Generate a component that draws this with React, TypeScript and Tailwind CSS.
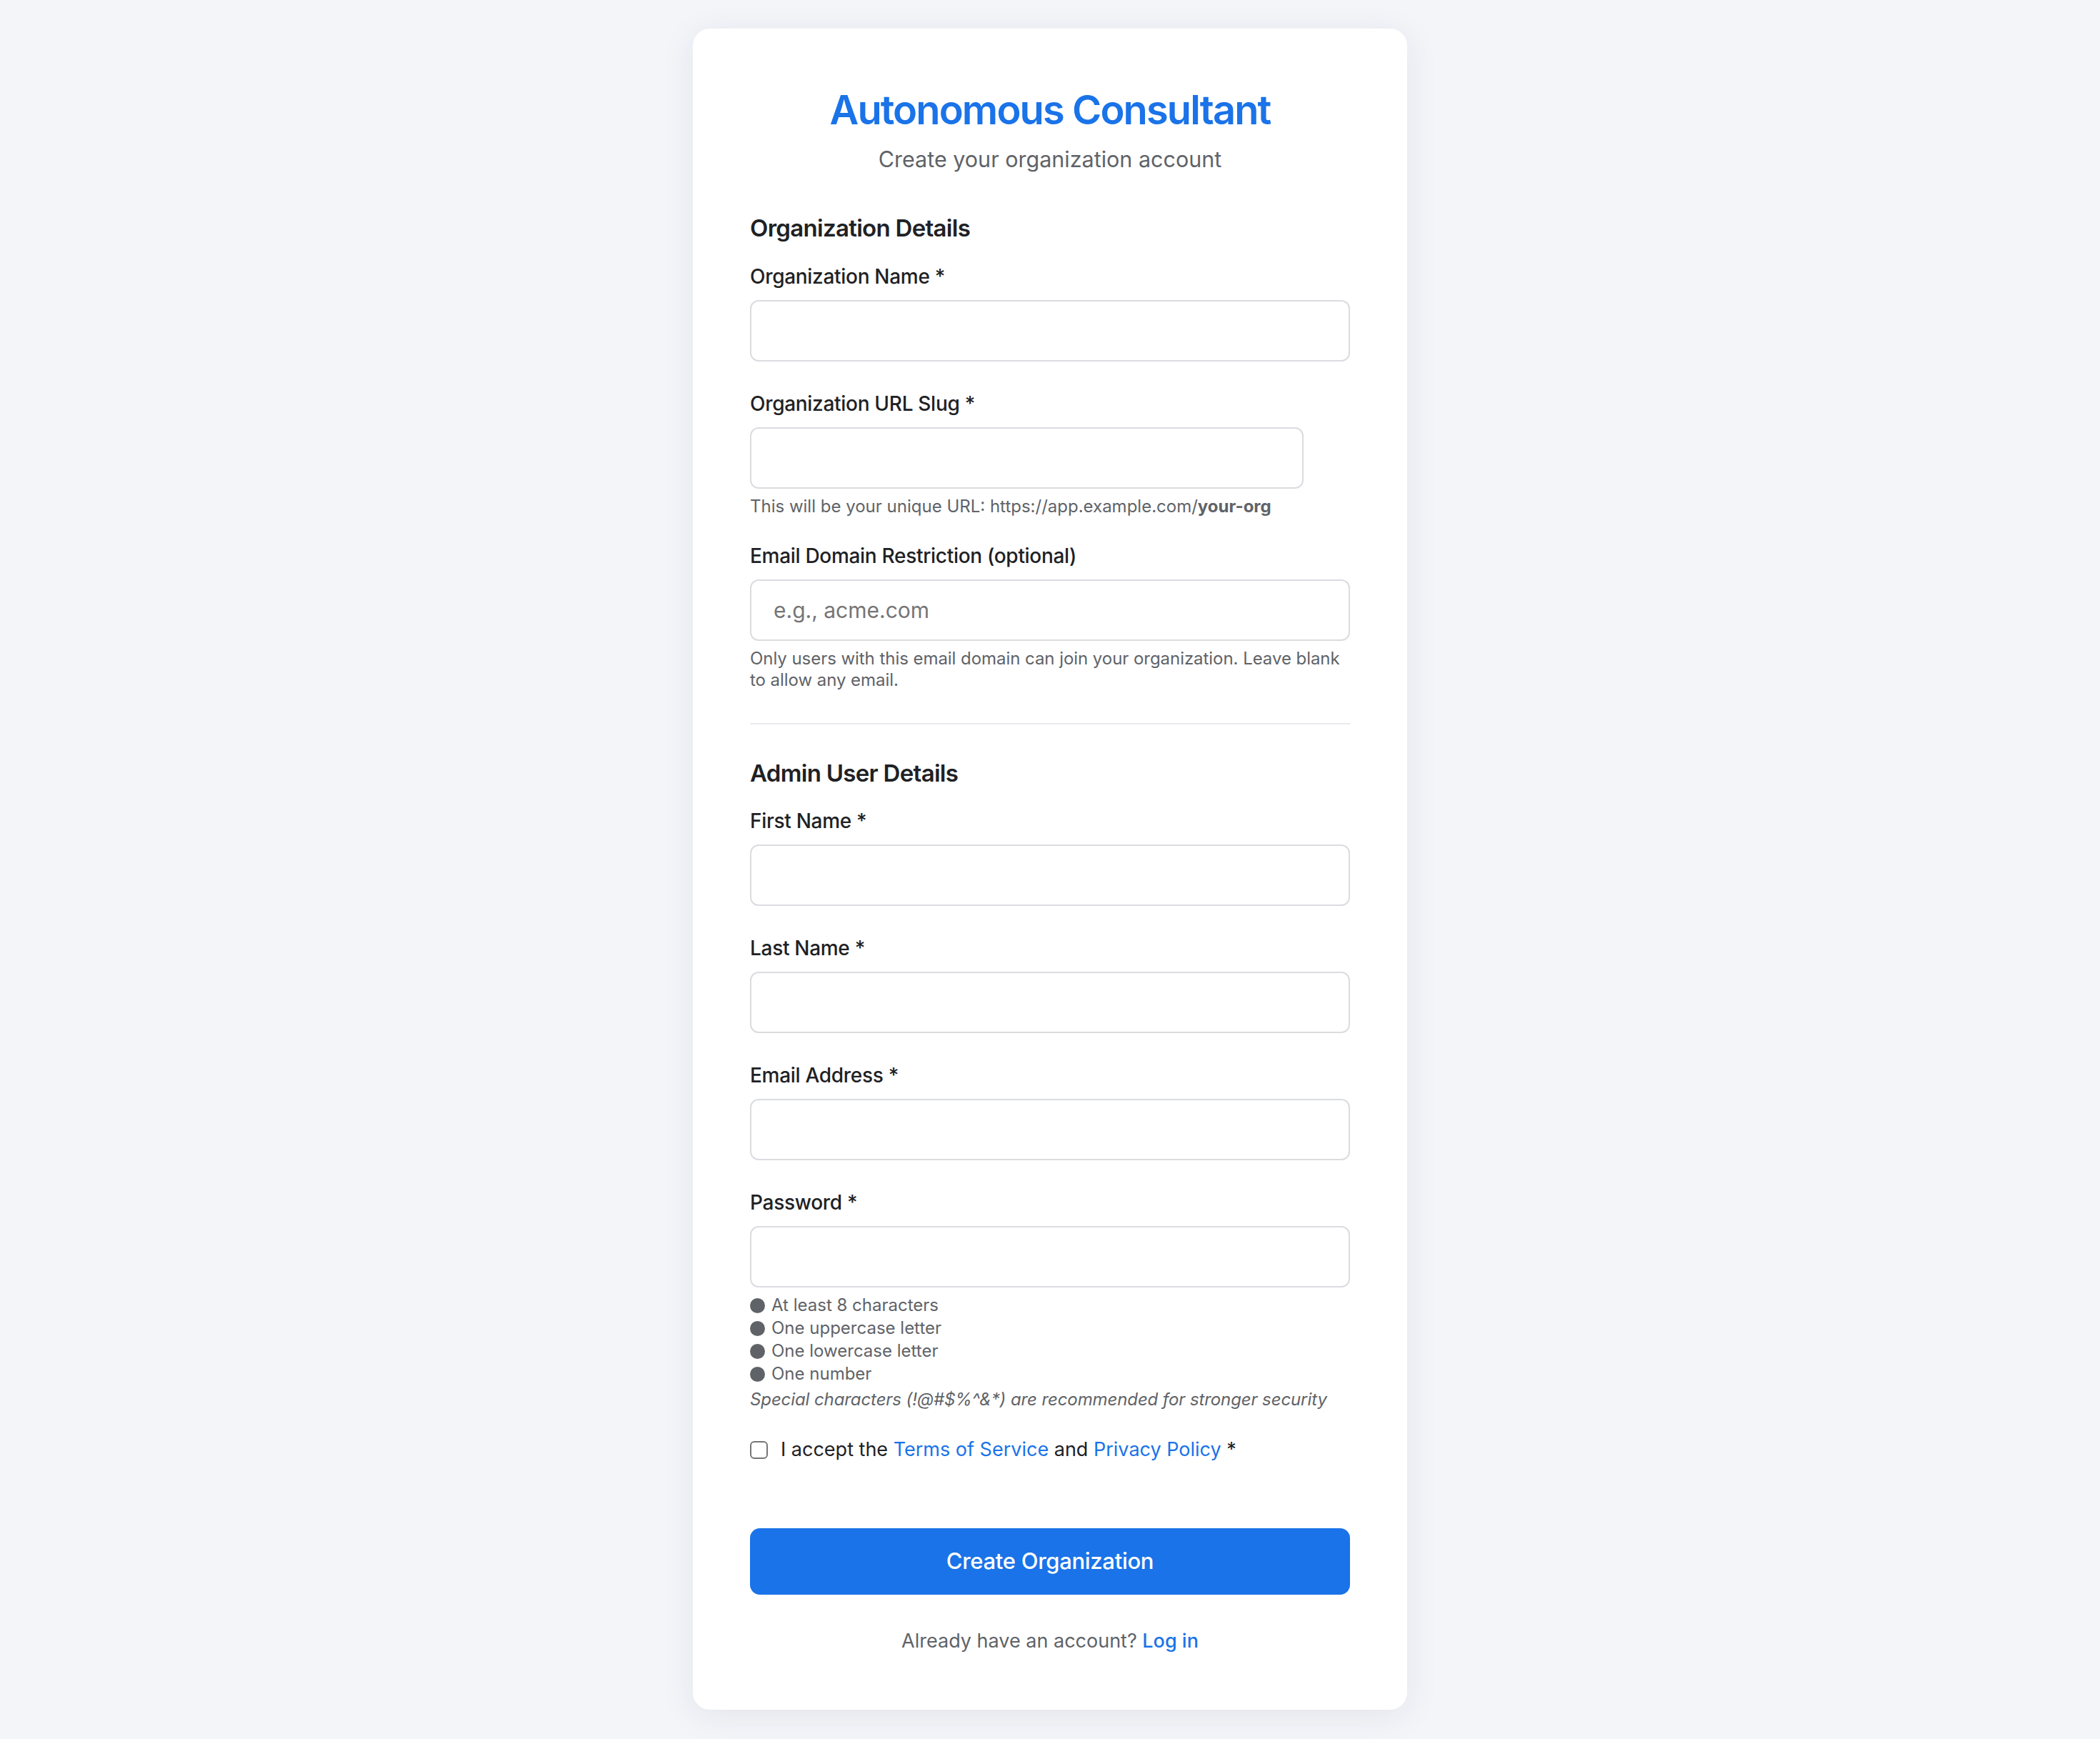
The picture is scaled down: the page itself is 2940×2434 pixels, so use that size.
import React from "react";

function Label({ children, className = "" }: { children: React.ReactNode; className?: string }) {
  return (
    <label className={`block text-[28px] leading-[40px] font-medium tracking-[-0.3px] text-[#202124] ${className}`}>{children}</label>
  );
}

function TextInput({ placeholder, type = "text", className = "w-full" }: { placeholder?: string; type?: string; className?: string }) {
  return (
    <input
      type={type}
      placeholder={placeholder}
      className={`${className} block mt-[13px] h-[86px] rounded-[12px] border-2 border-[#dadce0] bg-white px-[31px] text-[30px] text-[#202124] placeholder:text-[#757575] outline-none`}
    />
  );
}

function Rule({ text }: { text: string }) {
  return (
    <li className="flex items-center gap-[9px] text-[24px] leading-[32px] text-[#5f6368]">
      <span className="inline-block w-[21px] h-[21px] rounded-full bg-[#5f6368]" />
      <span>{text}</span>
    </li>
  );
}

export default function App() {
  return (
    <div className="min-h-[2434px] bg-[#f4f5f9] flex justify-center items-start pt-[40px] pb-[41px] font-['Inter',sans-serif]">
      <div className="w-[1000px] bg-white rounded-[24px] shadow-[0_8px_48px_rgba(30,40,70,0.08)] px-[80px] pt-[80px] pb-[76px]">
        <h1 className="text-center text-[56px] leading-[68px] font-semibold tracking-[-1.9px] text-[#1a73e8]">
          Autonomous Consultant
        </h1>
        <p className="mt-[13px] text-center text-[30.5px] leading-[44px] text-[#5f6368]">
          Create your organization account
        </p>

        <h2 className="mt-[52px] text-[33px] leading-[44px] font-semibold tracking-[-0.7px] text-[#202124]">Organization Details</h2>

        <div className="mt-[26px]">
          <Label>Organization Name *</Label>
          <TextInput />
        </div>

        <div className="mt-[39px]">
          <Label>Organization URL Slug *</Label>
          <TextInput className="w-[775px]" />
          <p className="mt-[10px] text-[24px] leading-[30px] text-[#5f6368]">
            This will be your unique URL: https://app.example.com/<span className="font-bold">your-org</span>
          </p>
        </div>

        <div className="mt-[34px]">
          <Label>Email Domain Restriction (optional)</Label>
          <TextInput placeholder="e.g., acme.com" />
          <p className="mt-[10px] text-[24px] leading-[30px] tracking-[-0.05px] text-[#5f6368]">
            Only users with this email domain can join your organization. Leave blank to allow any email.
          </p>
        </div>

        <div className="mt-[45px] h-[2px] bg-[#e8eaed]" />

        <h2 className="mt-[46px] text-[33px] leading-[44px] font-semibold tracking-[-0.7px] text-[#202124]">Admin User Details</h2>

        <div className="mt-[25px]">
          <Label>First Name *</Label>
          <TextInput />
        </div>

        <div className="mt-[39px]">
          <Label>Last Name *</Label>
          <TextInput />
        </div>

        <div className="mt-[39px]">
          <Label>Email Address *</Label>
          <TextInput type="email" />
        </div>

        <div className="mt-[39px]">
          <Label>Password *</Label>
          <TextInput type="password" />
          <ul className="mt-[9px]">
            <Rule text="At least 8 characters" />
            <Rule text="One uppercase letter" />
            <Rule text="One lowercase letter" />
            <Rule text="One number" />
          </ul>
          <p className="mt-[4px] text-[24px] leading-[32px] italic tracking-[-0.1px] text-[#5f6368]">
            Special characters (!@#$%^&amp;*) are recommended for stronger security
          </p>
        </div>

        <div className="mt-[34px] flex items-center gap-[18px] text-[27px] leading-[40px] text-[#202124]">
          <input
            type="checkbox"
            className="appearance-none shrink-0 w-[25px] h-[25px] rounded-[6px] border-2 border-[#767676] bg-white"
          />
          <span>
            I accept the <a className="text-[#1a73e8]">Terms of Service</a> and{" "}
            <a className="text-[#1a73e8]">Privacy Policy</a> *
          </span>
        </div>

        <button className="mt-[90px] w-full h-[93px] rounded-[14px] bg-[#1a73e8] text-white text-[31px] font-medium tracking-[-0.3px]">
          Create Organization
        </button>

        <p className="mt-[45px] text-center text-[27px] leading-[40px] text-[#5f6368]">
          Already have an account? <a className="font-medium text-[#1a73e8]">Log in</a>
        </p>
      </div>
    </div>
  );
}
